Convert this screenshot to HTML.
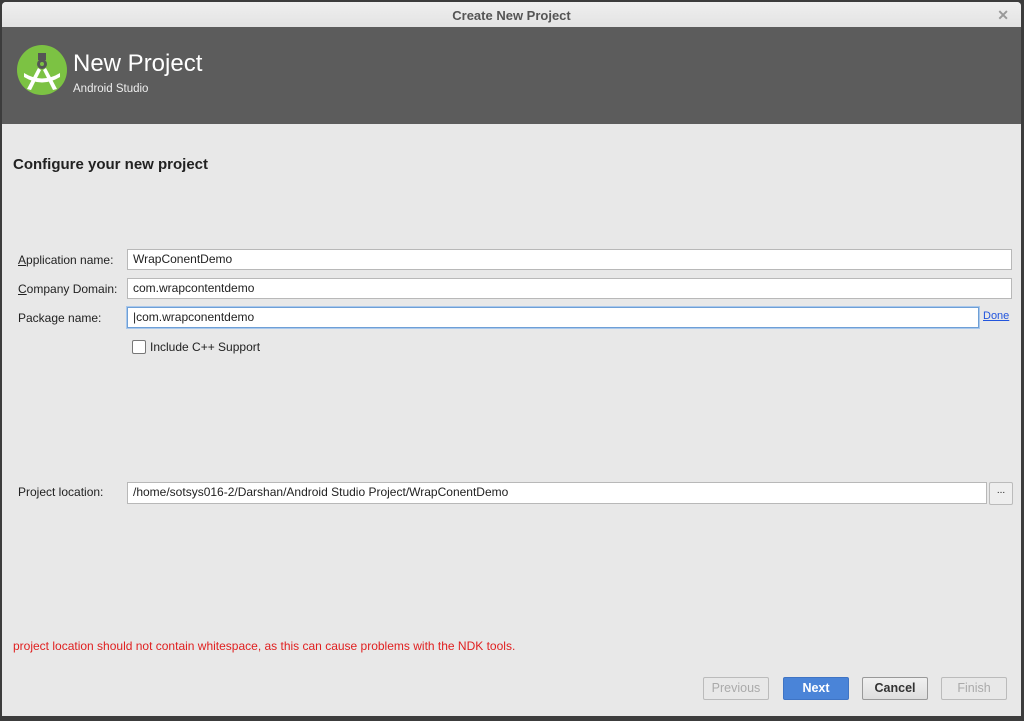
<!DOCTYPE html>
<html><head><style>
body{margin:0;width:1024px;height:721px;background:#3c3c3c;position:relative;overflow:hidden;font-family:"Liberation Sans",sans-serif;font-size:12px;color:#222}
.dlg{position:absolute;left:2px;top:2px;width:1019px;height:714px;background:#e8e8e8;border-radius:4px 4px 0 0;overflow:hidden}
.tb{position:absolute;left:0;top:0;width:100%;height:25px;background:linear-gradient(#efefef,#e3e3e3);border-bottom:1px solid #c8c8c8;text-align:center;line-height:27px;font-weight:bold;color:#555;font-size:13px}
.x{position:absolute;right:12px;top:0;color:#999;font-size:14px}
.hd{position:absolute;left:0;top:25px;width:100%;height:97px;background:#5c5c5c}
.t1{position:absolute;left:71px;top:23px;color:#fff;font-size:24px}
.t2{position:absolute;left:71px;top:56px;color:#eee;font-size:11.5px}
.lbl{position:absolute;left:16px;font-size:12px}
.in{position:absolute;left:125px;height:21px;background:#fff;border:1px solid #b8b8b8;box-sizing:border-box;padding-left:5px;line-height:19px;font-size:12px}
.btn{position:absolute;top:675px;width:66px;height:23px;border:1px solid #bbb;border-radius:2px;box-sizing:border-box;text-align:center;line-height:21px;font-size:12.5px}
</style></head><body>
<div class="dlg">
<div class="tb">Create New Project<span class="x">✕</span></div>
<div class="hd">
<svg style="position:absolute;left:14px;top:17px" width="52" height="52" viewBox="0 0 52 52">
<circle cx="26" cy="26" r="25" fill="#7cc243"/>
<rect x="22" y="9" width="8" height="7" fill="#555"/><circle cx="26" cy="20" r="5" fill="#555"/><circle cx="26" cy="20" r="2" fill="#7cc243"/>
<path d="M22 24 L11 45 L15 46 L25 26Z M30 24 L41 45 L37 46 L27 26Z" fill="#fff"/>
<path d="M8 29 Q26 40 44 29 L44 33 Q26 44 8 33Z" fill="#fff"/>
</svg>
<div class="t1">New Project</div><div class="t2">Android Studio</div>
</div>
<div style="position:absolute;left:11px;top:154px;font-weight:bold;font-size:15px">Configure your new project</div>
<div class="lbl" style="top:251px"><u>A</u>pplication name:</div>
<div class="in" style="top:247px;width:885px">WrapConentDemo</div>
<div class="lbl" style="top:280px"><u>C</u>ompany Domain:</div>
<div class="in" style="top:276px;width:885px">com.wrapcontentdemo</div>
<div class="lbl" style="top:309px">Package name:</div>
<div class="in" style="top:305px;width:852px;border:1px solid #6e9fd6;box-shadow:0 0 0 1px #a9c8ec">|com.wrapconentdemo</div>
<div style="position:absolute;left:981px;top:308px;color:#2255dd;text-decoration:underline;font-size:11px">Done</div>
<div style="position:absolute;left:130px;top:338px;width:12px;height:12px;border:1px solid #777;border-radius:2px;background:#fff"></div>
<div style="position:absolute;left:148px;top:338px">Include C++ Support</div>
<div class="lbl" style="top:483px">Project location:</div>
<div class="in" style="top:480px;width:860px;height:22px">/home/sotsys016-2/Darshan/Android Studio Project/WrapConentDemo</div>
<div style="position:absolute;left:987px;top:480px;width:22px;height:21px;border:1px solid #bbb;border-radius:2px;background:#eee;text-align:center;line-height:16px;font-size:10px">...</div>
<div style="position:absolute;left:11px;top:637px;color:#e02020;font-size:12px">project location should not contain whitespace, as this can cause problems with the NDK tools.</div>
<div class="btn" style="left:701px;color:#aaa">Previous</div>
<div class="btn" style="left:781px;background:#4a84d8;border-color:#3f74c4;color:#fff;font-weight:bold">Next</div>
<div class="btn" style="left:860px;background:linear-gradient(#f0f0f0,#dedede);border-color:#999;font-weight:bold;color:#333">Cancel</div>
<div class="btn" style="left:939px;color:#aaa">Finish</div>
</div>
</body></html>
